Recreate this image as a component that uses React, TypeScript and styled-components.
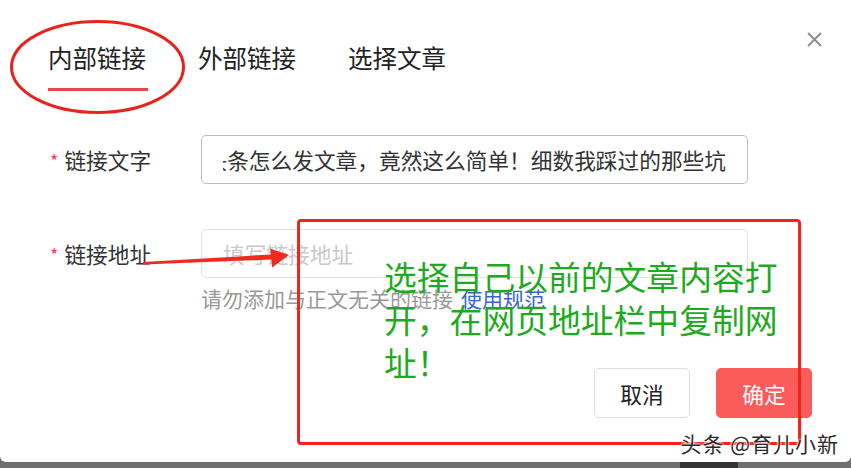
import React from "react";
import styled, { createGlobalStyle } from "styled-components";

const Global = createGlobalStyle`
  html, body { margin: 0; padding: 0; }
  body {
    width: 851px;
    height: 468px;
    overflow: hidden;
    background: #fff;
    font-family: "Noto Sans CJK SC", "Noto Sans", sans-serif;
  }
`;

const Page = styled.div`
  position: relative;
  width: 851px;
  height: 468px;
  background: #6f6f6f;
  display: flex;
  flex-direction: column;
`;

const Dialog = styled.div`
  height: 462px;
  background: #fff;
  border-radius: 0 0 6px 6px;
  box-sizing: border-box;
  padding: 40px 39px 0 48px;
  display: flex;
  flex-direction: column;
`;

const Header = styled.div`
  display: flex;
  justify-content: space-between;
  align-items: flex-start;
`;

const Tabs = styled.div`
  display: flex;
  gap: 50px;
`;

const Tab = styled.div<{ $active?: boolean }>`
  font-size: 24.5px;
  line-height: 35px;
  color: #222;
  width: 100px;
  padding-bottom: 13px;
  border-bottom: 3px solid ${(p) => (p.$active ? "#e8464b" : "transparent")};
  white-space: nowrap;
`;

const Close = styled.button`
  border: 0;
  background: none;
  padding: 0;
  margin: -8px -10px 0 0;
  width: 15px;
  height: 15px;
  display: flex;
  cursor: pointer;
`;

const Form = styled.div`
  margin-top: 44px;
  display: flex;
  flex-direction: column;
  gap: 45px;
`;

const Row = styled.div`
  display: flex;
  align-items: flex-start;
`;

const Label = styled.div`
  width: 153px;
  height: 49px;
  display: flex;
  align-items: center;
  font-size: 21.7px;
  color: #333;
  white-space: nowrap;
`;

const Star = styled.span`
  color: #e8464b;
  font-size: 18px;
  margin: 0 6px 0 2px;
`;

const Field = styled.div`
  display: flex;
  flex-direction: column;
`;

const Input = styled.div<{ $muted?: boolean }>`
  width: 547px;
  height: 49px;
  box-sizing: border-box;
  border: 1px solid ${(p) => (p.$muted ? "#e2e2e2" : "#bdbdbd")};
  border-radius: 5px;
  padding: 0 21px 0 21px;
  display: flex;
  align-items: center;
`;

const InputText = styled.div<{ $placeholder?: boolean }>`
  flex: 1;
  overflow: hidden;
  display: flex;
  justify-content: ${(p) => (p.$placeholder ? "flex-start" : "flex-end")};
  white-space: nowrap;
  font-size: 21.7px;
  color: ${(p) => (p.$placeholder ? "#c9c9c9" : "#333")};
`;

const Hint = styled.div`
  margin-top: 6px;
  font-size: 21px;
  line-height: 28px;
  color: #999;
  white-space: nowrap;
`;

const Link = styled.a`
  color: #3a64d0;
  text-decoration: none;
  margin-left: 8px;
`;

const Footer = styled.div`
  margin-top: 56px;
  display: flex;
  justify-content: flex-end;
  gap: 26px;
`;

const Button = styled.button<{ $primary?: boolean }>`
  width: 96px;
  height: 50px;
  border-radius: 5px;
  font-family: inherit;
  font-size: 21.7px;
  border: 1px solid ${(p) => (p.$primary ? "#fa5b5b" : "#dedede")};
  background: ${(p) => (p.$primary ? "#fa5b5b" : "#fff")};
  color: ${(p) => (p.$primary ? "#fff" : "#222")};
`;

const Overlay = styled.svg`
  position: absolute;
  left: 0;
  top: 0;
  width: 851px;
  height: 468px;
  pointer-events: none;
`;

const NoteBox = styled.div`
  position: absolute;
  left: 297px;
  top: 219px;
  width: 504px;
  height: 226px;
  box-sizing: border-box;
  border: 3.5px solid #f3241c;
  border-radius: 4px;
  padding: 32px 0 0 84px;
  pointer-events: none;
`;

const NoteText = styled.div`
  font-size: 32.8px;
  line-height: 43px;
  color: #1eaa1e;
  white-space: nowrap;
`;

const Watermark = styled.div`
  position: absolute;
  right: 12px;
  top: 428px;
  font-size: 21px;
  letter-spacing: 1px;
  line-height: 30px;
  color: #2a2a2a;
  text-shadow: 0 0 2px #fff, 0 0 2px #fff, 0 0 3px #fff;
  white-space: nowrap;
`;

const BottomTag = styled.div`
  position: absolute;
  left: 680px;
  bottom: 0;
  width: 58px;
  height: 6px;
  background: #333;
`;

export default function App() {
  return (
    <>
      <Global />
      <Page>
        <Dialog>
          <Header>
            <Tabs>
              <Tab $active>内部链接</Tab>
              <Tab>外部链接</Tab>
              <Tab>选择文章</Tab>
            </Tabs>
            <Close aria-label="关闭">
              <svg width="15" height="15" viewBox="0 0 15 15">
                <path d="M1 1 L14 14 M14 1 L1 14" stroke="#8a8a8a" strokeWidth="1.8" />
              </svg>
            </Close>
          </Header>
          <Form>
            <Row>
              <Label>
                <Star>*</Star>链接文字
              </Label>
              <Field>
                <Input>
                  <InputText>头条怎么发文章，竟然这么简单！细数我踩过的那些坑</InputText>
                </Input>
              </Field>
            </Row>
            <Row>
              <Label>
                <Star>*</Star>链接地址
              </Label>
              <Field>
                <Input $muted>
                  <InputText $placeholder>填写链接地址</InputText>
                </Input>
                <Hint>
                  请勿添加与正文无关的链接<Link href="#">使用规范</Link>
                </Hint>
              </Field>
            </Row>
          </Form>
          <Footer>
            <Button>取消</Button>
            <Button $primary>确定</Button>
          </Footer>
        </Dialog>
        <Overlay viewBox="0 0 851 468">
          <ellipse cx="97.5" cy="67" rx="86" ry="45.5" fill="none" stroke="#e8231c" strokeWidth="3" />
          <polygon points="143,262 271,254.5 270,248.5 289,255 272,267.5 271.5,259.5 143,264.5" fill="#f02a1e" />
        </Overlay>
        <NoteBox>
          <NoteText>
            选择自己以前的文章内容打
            <br />
            开，在网页地址栏中复制网
            <br />
            址！
          </NoteText>
        </NoteBox>
        <Watermark>头条 @育儿小新</Watermark>
        <BottomTag />
      </Page>
    </>
  );
}
